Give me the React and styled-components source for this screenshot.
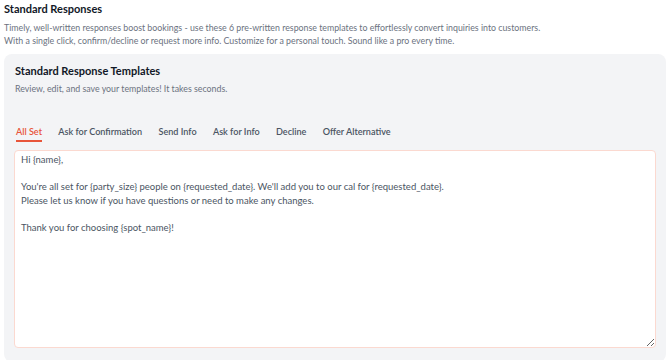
import React, { useState } from 'react';
import styled, { createGlobalStyle } from 'styled-components';

const GlobalStyle = createGlobalStyle`
  body {
    margin: 0;
    background: #ffffff;
    font-family: Lato, "Open Sans", sans-serif;
  }
`;

const Page = styled.div`
  padding: 1px 4px 0 4px;
  box-sizing: border-box;
  width: 670px;
`;

const Heading = styled.h2`
  margin: 0;
  font-size: 11px;
  line-height: 16px;
  font-weight: 700;
  color: #111827;
`;

const Description = styled.p`
  margin: 4px 0 0 0;
  font-size: 8.8px;
  line-height: 13px;
  color: #6b7280;
`;

const Card = styled.div`
  margin-top: 7px;
  background: #f3f4f6;
  border-radius: 8px;
  padding: 9px 10px 14px 10px;
  display: flex;
  flex-direction: column;
`;

const CardTitle = styled.h3`
  margin: 0 0 0 1px;
  font-size: 11px;
  line-height: 16px;
  font-weight: 700;
  color: #111827;
`;

const CardSubtitle = styled.p`
  margin: 3px 0 0 1px;
  font-size: 8.8px;
  line-height: 13px;
  color: #6b7280;
`;

const Tabs = styled.div`
  display: flex;
  gap: 16.3px;
  margin-top: 30px;
  padding-left: 2px;
`;

const Tab = styled.button`
  background: none;
  border: none;
  padding: 0 0 2px 0;
  font-family: inherit;
  font-size: 9.1px;
  line-height: 13px;
  font-weight: 600;
  cursor: pointer;
  color: ${p => (p.$active ? '#e8553a' : '#4b5563')};
  border-bottom: 2px solid ${p => (p.$active ? '#e8553a' : 'transparent')};
`;

const Editor = styled.textarea`
  margin-top: 8px;
  width: 100%;
  height: 198px;
  box-sizing: border-box;
  border: 1px solid #fbd9d0;
  border-radius: 4px;
  background: #ffffff;
  padding: 2px 6px;
  font-family: inherit;
  font-size: 9.5px;
  line-height: 13.6px;
  color: #4b5563;
  outline: none;
  resize: vertical;
`;

const tabs = ['All Set', 'Ask for Confirmation', 'Send Info', 'Ask for Info', 'Decline', 'Offer Alternative'];

const template = `Hi {name},

You're all set for {party_size} people on {requested_date}. We'll add you to our cal for {requested_date}.
Please let us know if you have questions or need to make any changes.

Thank you for choosing {spot_name}!`;

export default function App() {
  const [active, setActive] = useState(0);

  return (
    <Page>
      <GlobalStyle />
      <Heading>Standard Responses</Heading>
      <Description>
        Timely, well-written responses boost bookings - use these 6 pre-written response templates to effortlessly convert inquiries into customers.
        <br />
        With a single click, confirm/decline or request more info. Customize for a personal touch. Sound like a pro every time.
      </Description>
      <Card>
        <CardTitle>Standard Response Templates</CardTitle>
        <CardSubtitle>Review, edit, and save your templates! It takes seconds.</CardSubtitle>
        <Tabs>
          {tabs.map((t, i) => (
            <Tab key={t} $active={i === active} onClick={() => setActive(i)}>
              {t}
            </Tab>
          ))}
        </Tabs>
        <Editor defaultValue={template} />
      </Card>
    </Page>
  );
}
